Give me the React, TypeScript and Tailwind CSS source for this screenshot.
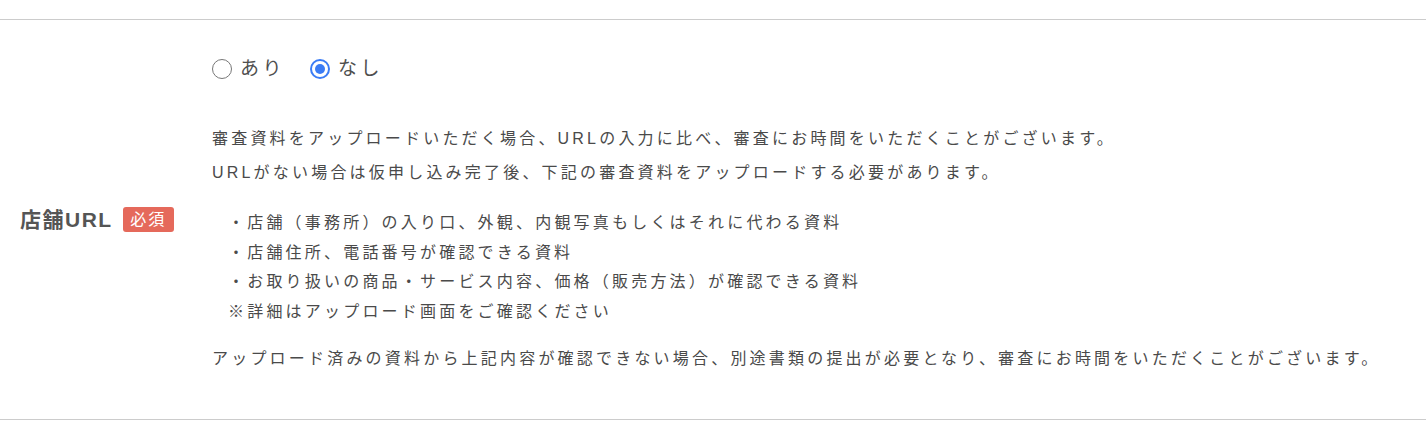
import { useState } from "react";

const font = "font-['Liberation_Sans','Noto_Sans_CJK_JP',sans-serif]";

const Radio = ({ checked, label, onClick }: { checked: boolean; label: string; onClick: () => void }) => (
  <label className="flex items-center cursor-pointer" onClick={onClick}>
    {checked ? (
      <span className="w-5 h-5 rounded-full border-2 border-[#3b7cf5] flex items-center justify-center">
        <span className="w-[10px] h-[10px] rounded-full bg-[#3b7cf5]" />
      </span>
    ) : (
      <span className="w-5 h-5 rounded-full border-[1.5px] border-[#777]" />
    )}
    <span className="ml-2 text-[19px] leading-[30px] tracking-[3.5px] text-[#4f4f4f]">{label}</span>
  </label>
);

const App = () => {
  const [hasUrl, setHasUrl] = useState(false);

  return (
    <div className={`${font} bg-white w-[1426px] h-[438px] pt-[19px]`}>
      <div className="flex border-t border-b border-[#cccccc]">
        {/* label */}
        <div className="w-[212px] shrink-0 flex items-center pl-5">
          <span className="text-[21px] font-bold tracking-[1.5px] text-[#555]">店舗URL</span>
          <span className="ml-[10px] w-[51px] h-[25px] rounded-[3px] bg-[#e5695b] text-white text-[16px] tracking-[2px] flex items-center justify-center">
            必須
          </span>
        </div>

        {/* content */}
        <div className="flex-1 pt-[34px] pb-[43px] text-[#4a4a4a] text-[16px] tracking-[0.2em]">
          <div className="flex items-center gap-[25px]">
            <Radio checked={hasUrl} label="あり" onClick={() => setHasUrl(true)} />
            <Radio checked={!hasUrl} label="なし" onClick={() => setHasUrl(false)} />
          </div>

          <div className="mt-[38px] leading-[34px]">
            <p>審査資料をアップロードいただく場合、URLの入力に比べ、審査にお時間をいただくことがございます。</p>
            <p>URLがない場合は仮申し込み完了後、下記の審査資料をアップロードする必要があります。</p>
          </div>

          <ul className="mt-[18px] pl-4 leading-[29.5px]">
            <li>・店舗（事務所）の入り口、外観、内観写真もしくはそれに代わる資料</li>
            <li>・店舗住所、電話番号が確認できる資料</li>
            <li>・お取り扱いの商品・サービス内容、価格（販売方法）が確認できる資料</li>
            <li>※詳細はアップロード画面をご確認ください</li>
          </ul>

          <p className="mt-[16px] leading-[34px]">
            アップロード済みの資料から上記内容が確認できない場合、別途書類の提出が必要となり、審査にお時間をいただくことがございます。
          </p>
        </div>
      </div>
    </div>
  );
};

export default App;
